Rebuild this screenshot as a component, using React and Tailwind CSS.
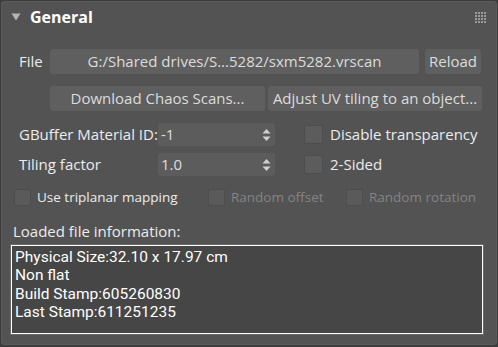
import React from "react";

const font = { fontFamily: '"Open Sans", "Noto Sans", sans-serif' };
const infoFont = { fontFamily: 'Roboto, "Open Sans", sans-serif' };

function Spinner({ value }) {
  return (
    <div className="flex h-[23px] w-[117px] items-center justify-between rounded-[3px] bg-[#5c5c5c] pl-[3px] pr-[4px] text-[15px] text-[#dedede]">
      <span>{value}</span>
      <svg width="9" height="14" viewBox="0 0 9 14">
        <path d="M4.5 1 L8.5 5.5 L0.5 5.5 Z" fill="#d0d0d0" />
        <path d="M4.5 13 L8.5 8.5 L0.5 8.5 Z" fill="#d0d0d0" />
      </svg>
    </div>
  );
}

function Check({ label, disabled, size = "lg" }) {
  return (
    <div className="flex items-center">
      <div
        className={
          size === "lg"
            ? "h-[19px] w-[19px] rounded-[2px] border border-[#4d4d4d] bg-[#5c5c5c]"
            : "h-[17px] w-[17px] rounded-[2px] border border-[#4d4d4d] bg-[#5a5a5a]"
        }
      />
      <span
        className={
          (size === "lg" ? "ml-[7px] text-[15px] " : "ml-[6px] text-[13.5px] ") +
          (disabled ? "text-[#838383]" : "text-[#ececec]")
        }
      >
        {label}
      </span>
    </div>
  );
}

export default function App() {
  return (
    <div className="h-[347px] w-[498px] bg-[#3c3c3c] p-px" style={font}>
      <div className="flex h-[344px] flex-col rounded-[3px] border border-[#5a5a5a] bg-[#535353]">
        {/* header */}
        <div className="flex h-[30px] items-center pl-[9px] pr-[10px]">
          <svg width="10" height="8" viewBox="0 0 10 8">
            <path d="M0.5 0.5 L9.5 0.5 L5 7.5 Z" fill="#b4b4b4" />
          </svg>
          <span className="ml-[9px] text-[16px] font-bold text-white">General</span>
          <div className="ml-auto grid grid-cols-4 gap-[1px]">
            {Array.from({ length: 16 }).map((_, i) => (
              <div key={i} className="h-[2px] w-[2px] bg-[#9a9a9a]" />
            ))}
          </div>
        </div>

        {/* File row */}
        <div className="mt-[17px] flex items-center pl-[17px]">
          <span className="w-[31px] text-[15px] text-[#ececec]">File</span>
          <div className="flex h-[25px] w-[369px] items-center justify-center rounded-[3px] bg-[#5f5f5f] text-[15px] text-[#dcdcdc]">
            G:/Shared drives/S...5282/sxm5282.vrscan
          </div>
          <div className="ml-[6px] flex h-[25px] w-[56px] items-center justify-center rounded-[3px] bg-[#5f5f5f] text-[15px] text-[#dcdcdc]">
            Reload
          </div>
        </div>

        {/* Buttons row */}
        <div className="mt-[12px] flex items-center pl-[48px]">
          <div className="flex h-[25px] w-[215px] items-center justify-center rounded-[3px] bg-[#5f5f5f] text-[15px] text-[#dcdcdc]">
            Download Chaos Scans...
          </div>
          <div className="ml-[3px] flex h-[25px] w-[214px] items-center justify-center rounded-[3px] bg-[#5f5f5f] text-[15px] text-[#dcdcdc] whitespace-nowrap">
            Adjust UV tiling to an object...
          </div>
        </div>

        {/* GBuffer row */}
        <div className="mt-[12px] flex items-center pl-[17px]">
          <span className="w-[139px] text-[15px] text-[#ececec] whitespace-nowrap">GBuffer Material ID:</span>
          <Spinner value="-1" />
          <div className="ml-[29px]">
            <Check label="Disable transparency" />
          </div>
        </div>

        {/* Tiling row */}
        <div className="mt-[7px] flex items-center pl-[17px]">
          <span className="w-[139px] text-[15px] text-[#ececec]">Tiling factor</span>
          <Spinner value="1.0" />
          <div className="ml-[29px]">
            <Check label="2-Sided" />
          </div>
        </div>

        {/* Triplanar row */}
        <div className="mt-[11px] flex items-center pl-[12px]">
          <div className="w-[194px]">
            <Check label="Use triplanar mapping" size="sm" />
          </div>
          <div className="w-[138px]">
            <Check label="Random offset" size="sm" disabled />
          </div>
          <Check label="Random rotation" size="sm" disabled />
        </div>

        {/* Loaded info */}
        <div className="mt-[13px] pl-[11px] text-[15px] text-[#ececec]">Loaded file information:</div>
        <div className="ml-[8px] mt-[1px] w-[474px] border border-[#6a6a6a]">
          <div
            className="h-[89px] border border-white bg-[#464646] px-[3px] pt-[2px] text-[15.5px] leading-[18.5px] text-white"
            style={infoFont}
          >
            <div>Physical Size:32.10 x 17.97 cm</div>
            <div>Non flat</div>
            <div>Build Stamp:605260830</div>
            <div>Last Stamp:611251235</div>
          </div>
        </div>
      </div>
    </div>
  );
}
